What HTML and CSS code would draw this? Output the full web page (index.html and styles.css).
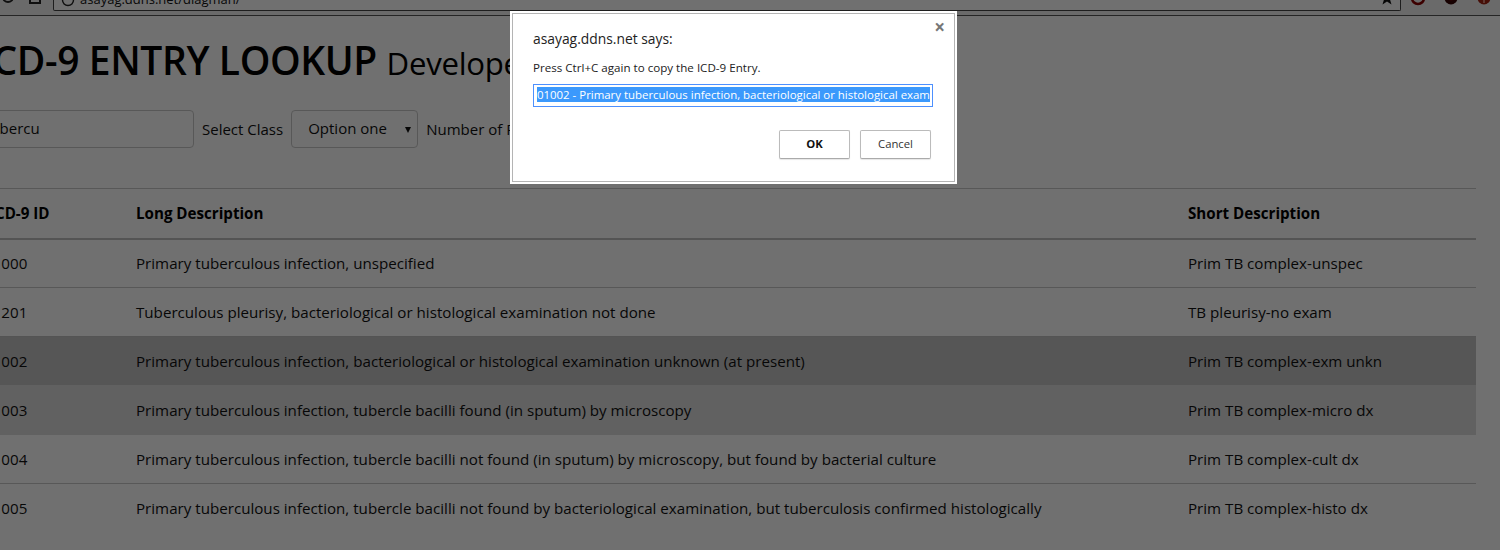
FILE: index.html
```html
<!DOCTYPE html>
<html lang="en">
<head>
<meta charset="utf-8">
<title>ICD-9 Entry Lookup</title>
<link rel="stylesheet" href="styles.css">
</head>
<body>
<header class="chrome">
  <div class="chrome-nav">
    <svg class="nav-icon" width="16" height="16" viewBox="0 0 16 16"><circle cx="8" cy="4" r="5" fill="none" stroke="#222" stroke-width="2"/></svg>
    <svg class="nav-icon" width="14" height="16" viewBox="0 0 14 16"><path d="M2 1h10v9H2z" fill="none" stroke="#222" stroke-width="2"/></svg>
  </div>
  <div class="omnibox">
    <svg class="info-icon" width="14" height="14" viewBox="0 0 14 14"><circle cx="7" cy="3" r="5.500" fill="none" stroke="#222" stroke-width="1.400"/></svg>
    <span class="url">asayag.ddns.net/diagman/</span>
    <svg class="star" width="14" height="14" viewBox="0 3 14 14"><path d="M7 -6 9 -1h5l-4 3.500 1.500 5L7 4.500 2.500 7.500 4 2.500 0-1h5z" fill="#111"/></svg>
  </div>
  <div class="extensions">
    <svg width="16" height="10" viewBox="0 0 16 10"><circle cx="8" cy="-2" r="6" fill="none" stroke="#8a0000" stroke-width="2.500"/></svg>
    <svg width="16" height="10" viewBox="0 0 16 10"><circle cx="8" cy="-2" r="6.500" fill="#300"/><circle cx="8" cy="-3" r="3.500" fill="#600"/></svg>
    <svg width="16" height="10" viewBox="0 0 16 10"><circle cx="8" cy="-2" r="6.500" fill="#a02010"/><path d="M8-2v5" stroke="#e8a090" stroke-width="1.500"/></svg>
  </div>
</header>

<main class="page">
  <h1 class="title">ICD-9 ENTRY LOOKUP <small>Developer</small></h1>
  <form class="filters">
    <input class="field search" type="text" value="tubercu">
    <span class="label">Select Class</span>
    <span class="field select">Option one<i class="caret"></i></span>
    <span class="label">Number of Results</span>
  </form>
  <table class="results">
    <thead>
      <tr><th class="c-id">ICD-9 ID</th><th class="c-long">Long Description</th><th>Short Description</th></tr>
    </thead>
    <tbody>
      <tr><td>01000</td><td>Primary tuberculous infection, unspecified</td><td>Prim TB complex-unspec</td></tr>
      <tr><td>01201</td><td>Tuberculous pleurisy, bacteriological or histological examination not done</td><td>TB pleurisy-no exam</td></tr>
      <tr class="active"><td>01002</td><td>Primary tuberculous infection, bacteriological or histological examination unknown (at present)</td><td>Prim TB complex-exm unkn</td></tr>
      <tr class="hover"><td>01003</td><td>Primary tuberculous infection, tubercle bacilli found (in sputum) by microscopy</td><td>Prim TB complex-micro dx</td></tr>
      <tr class="after-hover"><td>01004</td><td>Primary tuberculous infection, tubercle bacilli not found (in sputum) by microscopy, but found by bacterial culture</td><td>Prim TB complex-cult dx</td></tr>
      <tr><td>01005</td><td>Primary tuberculous infection, tubercle bacilli not found by bacteriological examination, but tuberculosis confirmed histologically</td><td>Prim TB complex-histo dx</td></tr>
    </tbody>
  </table>
</main>

<div class="overlay"></div>

<div class="dialog" role="dialog">
  <span class="close">×</span>
  <h2 class="dialog-title">asayag.ddns.net says:</h2>
  <p class="dialog-msg">Press Ctrl+C again to copy the ICD-9 Entry.</p>
  <div class="prompt"><span class="selection">01002 - Primary tuberculous infection, bacteriological or histological exam</span></div>
  <div class="dialog-actions">
    <button class="btn btn-ok" type="button">OK</button>
    <button class="btn" type="button">Cancel</button>
  </div>
</div>
</body>
</html>
```
FILE: styles.css
```css
* { box-sizing: border-box; }
html, body { margin: 0; height: 550px; overflow: hidden; }
body {
  background: #fff;
  color: #000;
  font-family: "Open Sans", "Noto Sans", "Liberation Sans", sans-serif;
  font-size: 15px;
}

/* Browser toolbar, cut off at the top of the shot */
.chrome {
  display: flex;
  align-items: flex-end;
  height: 16px;
  background: #f2f2f2;
  border-bottom: 1px solid #555;
  overflow: hidden;
}
.chrome-nav { display: flex; gap: 12px; width: 53px; flex: none; align-self: flex-start; margin-top: -7px; }
.omnibox {
  display: flex;
  align-items: flex-end;
  flex: none;
  width: 1348px;
  height: 11px;
  background: #fff;
  border: 1px solid #444;
  border-top: 0;
  border-radius: 0 0 2px 2px;
  margin-bottom: 4px;
  padding-left: 7px;
}
.info-icon { flex: none; align-self: flex-start; margin-top: -3px; }
.url { font-size: 13px; line-height: 13px; margin: -7px 0 0 5px; align-self: flex-start; color: #111; }
.star { margin-left: auto; margin-right: 6px; align-self: flex-start; }
.extensions { display: flex; gap: 17px; padding-left: 9px; align-self: flex-start; }

/* Page */
.page { margin-left: -28px; width: 1504px; }
.title {
  margin: 20px 0 0;
  padding-left: 9px;
  font-size: 39px;
  line-height: 48px;
  font-weight: 600;
  white-space: nowrap;
  letter-spacing: -0.4px;
}
.title small { font-size: 31.200px; font-weight: 400; letter-spacing: -0.3px; }

.filters { display: flex; align-items: center; gap: 8px; margin-top: 23px; height: 38px; white-space: nowrap; }
.field {
  height: 38px;
  border: 1px solid #c8c8c8;
  border-radius: 4px;
  background: #fff;
  font: inherit;
  font-size: 15px;
  color: #111;
}
.search { width: 222px; padding: 0 12px 3px; }
.select { display: flex; align-items: center; width: 127px; padding: 0 0 3px 16px; position: relative; }
.caret {
  position: absolute;
  right: 6px;
  top: 16px;
  border-left: 3px solid transparent;
  border-right: 3px solid transparent;
  border-top: 6px solid #111;
}
.label { font-size: 15px; color: #111; }

.results { border-collapse: collapse; table-layout: fixed; width: 1504px; margin-top: 40px; }
.results th, .results td {
  text-align: left;
  padding: 0 0 0 12px;
  height: 49px;
  border-top: 1px solid #c8c8c8;
  font-size: 15.150px;
  white-space: nowrap;
  color: #111;
}
.results th { height: 50px; font-weight: 700; border-bottom: 2px solid #c0c0c0; color: #000; }
.results .c-id { width: 152px; padding-left: 18px; }
.c-long { width: 1052px; }
.results .active td { background: #c4c4c4; border-top-color: #c0c0c0; }
.results .hover td { background: #dcdcdc; border-top-color: #dcdcdc; }
.results .after-hover td { border-top-color: #dcdcdc; }

/* Dialog */
.overlay { position: fixed; inset: 0; background: rgba(0, 0, 0, 0.56); }
.dialog {
  position: fixed;
  left: 510px;
  top: 11px;
  width: 447px;
  height: 173px;
  background: #fff;
  border: 2px solid #fff;
  box-shadow: inset 0 0 0 1px #b4b4b4;
  padding: 16px 21px;
  color: #111;
}
.close { position: absolute; right: 10px; top: 3px; font-size: 19px; font-weight: 700; color: #777; line-height: 22px; }
.dialog-title { margin: 0; font-size: 13.850px; line-height: 20px; font-weight: 400; color: #222; }
.dialog-msg { margin: 11px 0 0; font-size: 11.600px; line-height: 16px; color: #222; }
.prompt {
  margin-top: 8px;
  height: 23px;
  width: 400px;
  border: 1px solid #4d90fe;
  padding: 2px 3px;
  overflow: hidden;
  white-space: nowrap;
  font-size: 11.430px;
  line-height: 15px;
  color: #fff;
}
.selection { display: inline-block; background: #3b99fc; }
.dialog-actions { display: flex; justify-content: flex-end; gap: 10px; margin-top: 23px; padding-right: 3px; }
.btn {
  width: 71px;
  height: 29px;
  padding: 0 0 2px;
  background: #fff;
  border: 1px solid #bbb;
  border-bottom-color: #aaa;
  border-radius: 2px;
  box-shadow: 0 1px 1px rgba(0, 0, 0, 0.1);
  font: inherit;
  font-size: 11.300px;
  color: #333;
}
.btn-ok { font-weight: 700; color: #111; }
```
